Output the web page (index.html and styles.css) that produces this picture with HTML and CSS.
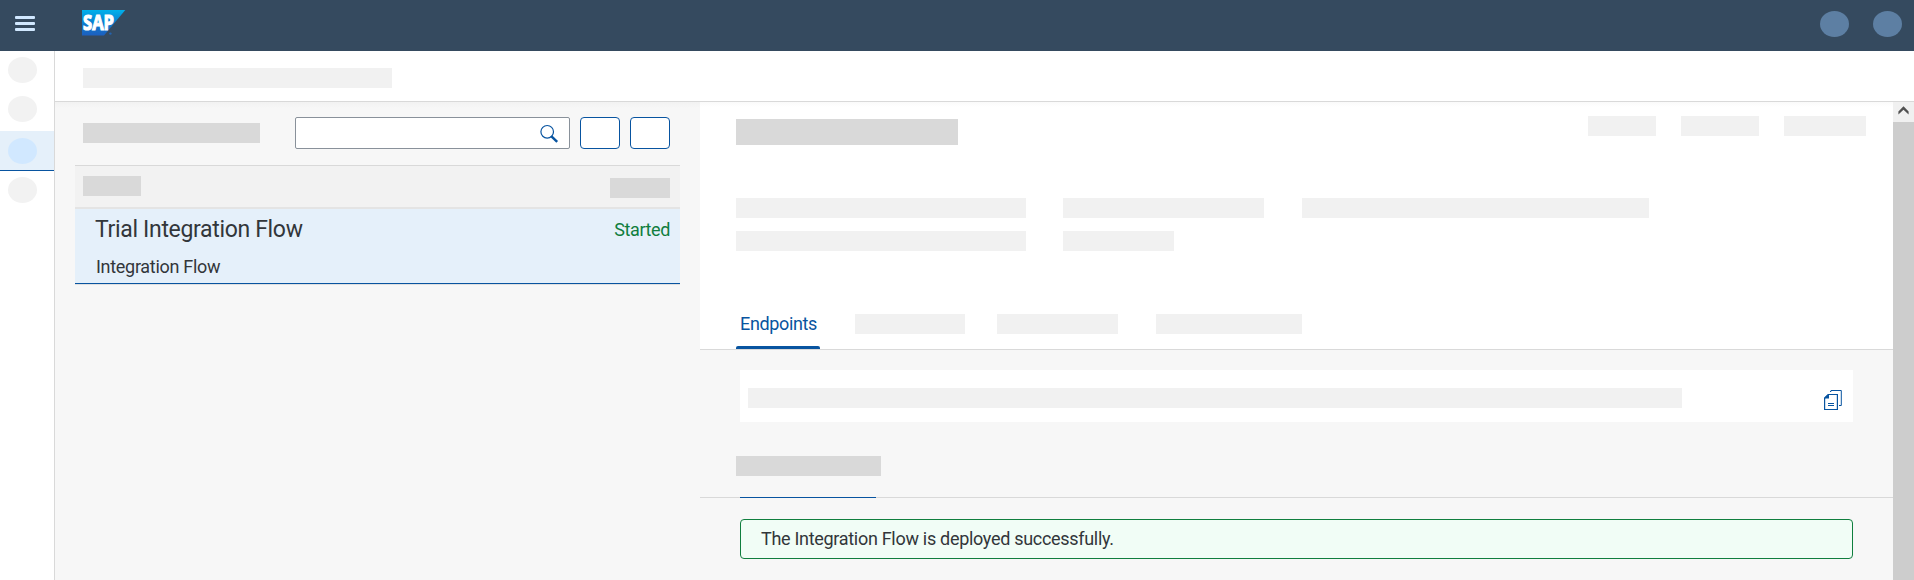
FILE: index.html
```html
<!DOCTYPE html>
<html lang="en">
<head>
<meta charset="utf-8">
<title>Manage Integration Content</title>
<link rel="stylesheet" href="styles.css">
</head>
<body>
<header class="shell">
  <div class="burger"><i></i><i></i><i></i></div>
  <svg class="logo" width="46" height="34" viewBox="-2 -4 46 34">
    <defs><linearGradient id="sap" x1="0" y1="0" x2="0" y2="1"><stop offset="0" stop-color="#00b1eb"/><stop offset="0.5" stop-color="#0a7fd0"/><stop offset="1" stop-color="#1d5fbf"/></linearGradient></defs>
    <path d="M0 0H43.3L22 25.5H0Z" fill="url(#sap)"/>
    <text class="logo-text" x="1" y="20.3" textLength="31" lengthAdjust="spacingAndGlyphs">SAP</text>
    <circle cx="28.4" cy="23.6" r="1.2" fill="#2463b0"/>
  </svg>
  <div class="shell-actions"><span class="dot blue"></span><span class="dot blue"></span></div>
</header>
<div class="body">
  <nav class="side">
    <div class="nav-item first"><span class="dot"></span></div>
    <div class="nav-item second"><span class="dot"></span></div>
    <div class="nav-item active"><span class="dot"></span></div>
    <div class="nav-item last"><span class="dot"></span></div>
  </nav>
  <div class="work">
    <div class="crumbs"><span class="ph w309"></span></div>
    <main class="split">
      <section class="master">
        <div class="toolbar">
          <span class="ph dark w177"></span>
          <div class="search">
            <svg width="19" height="18" viewBox="0 0 19 18"><circle cx="7.2" cy="6.8" r="6.3" fill="none" stroke="#0854a0" stroke-width="1.2"/><path d="M11.2 11.2L17.2 16.8" stroke="#0854a0" stroke-width="2.5"/></svg>
          </div>
          <span class="btn"></span><span class="btn"></span>
        </div>
        <div class="thead"><span class="ph dark w58"></span><span class="ph dark w60"></span></div>
        <div class="item">
          <div class="item-top"><span class="name">Trial Integration Flow</span><span class="status">Started</span></div>
          <div class="type">Integration Flow</div>
        </div>
      </section>
      <section class="detail">
        <div class="object">
          <div class="object-top">
            <span class="ph dark title"></span>
            <div class="actions"><span class="ph w68"></span><span class="ph w78"></span><span class="ph w82"></span></div>
          </div>
          <div class="facts">
            <span class="ph w290"></span><span class="ph w201"></span><span class="ph w347"></span>
            <span class="ph w290"></span><span class="ph w111"></span>
          </div>
          <div class="tabs">
            <div class="tab"><span>Endpoints</span><i></i></div>
            <span class="ph w110"></span><span class="ph w121"></span><span class="ph w146"></span>
          </div>
        </div>
        <div class="endpoint">
          <span class="ph w934"></span>
          <svg width="18" height="20" viewBox="0 0 18 20" fill="none" stroke="#0854a0">
            <path d="M6 1.5H7V0.5H17.3V15.5H15"/>
            <path d="M4.5 4.5H13.4V19.5H0.6V8.2Z" stroke-width="1.2"/>
            <path d="M0.3 8.5V7.5L4 4H5V8.5Z" fill="#0854a0" stroke="none"/>
            <path d="M4 13.5H10M4 15.5H10"/>
          </svg>
        </div>
        <div class="section-head"><span class="ph dark w145"></span></div>
        <div class="section-line"><i></i></div>
        <div class="message"><span>The Integration Flow is deployed successfully.</span></div>
      </section>
      <div class="scroll"><div class="up"><svg width="11" height="10" viewBox="0 0 11 10"><path d="M0.4 8.6V5.6L5.5 0.2L10.6 5.6V8.6L5.5 3.8Z" fill="#505050"/></svg></div></div>
    </main>
  </div>
</div>
</body>
</html>
```
FILE: styles.css
```css
* { box-sizing: border-box; }
body { margin: 0; height: 580px; overflow: hidden; display: flex; flex-direction: column; font-family: Roboto, "Liberation Sans", sans-serif; color: #32363a; background: #f7f7f7; }
svg { display: block; flex: none; overflow: visible; }

.shell { height: 51px; flex: none; background: #354a5f; display: flex; padding-left: 15px; }
.burger { width: 20px; margin-top: 16px; display: flex; flex-direction: column; gap: 3px; }
.burger i { height: 3px; border-radius: 1px; background: #d1e8ff; }
.logo { margin: 6px 0 0 45px; }
.logo-text { font: bold 21px "Open Sans", sans-serif; fill: #fff; stroke: #fff; stroke-width: 1.2px; }
.shell-actions { margin: 11px 12px 0 auto; display: flex; gap: 24px; }
.dot { display: block; width: 29px; height: 26px; border-radius: 50%; background: #f2f2f2; }
.dot.blue { background: #5d7fa3; }

.body { flex: 1; display: flex; min-height: 0; }
.side { width: 55px; flex: none; background: #fff; border-right: 1px solid #d9d9d9; }
.nav-item { padding-left: 8px; }
.first { height: 39px; padding-top: 6px; }
.second { height: 41px; padding-top: 6px; }
.active { height: 40px; padding-top: 7px; background: #e5f0fa; border-bottom: 1px solid #0854a0; }
.active .dot { background: #d1e8ff; }
.last { padding-top: 6px; }

.work { flex: 1; min-width: 0; display: flex; flex-direction: column; }
.crumbs { height: 51px; flex: none; background: #fff; border-bottom: 1px solid #d9d9d9; padding: 17px 0 0 28px; }
.ph { display: block; flex: none; height: 20px; background: #f1f1f1; }
.dark { background: #d9d9d9; }
.w58 { width: 58px; } .w60 { width: 60px; } .w68 { width: 68px; } .w78 { width: 78px; } .w82 { width: 82px; }
.w110 { width: 110px; } .w111 { width: 111px; } .w121 { width: 121px; } .w145 { width: 145px; } .w146 { width: 146px; }
.w177 { width: 177px; } .w201 { width: 201px; } .w290 { width: 290px; } .w309 { width: 309px; } .w347 { width: 347px; } .w934 { width: 934px; }

.split { flex: 1; display: flex; min-height: 0; background: linear-gradient(#f2f2f2, #f7f7f7 6px); }
.master { width: 605px; margin: 0 20px; flex: none; }
.toolbar { height: 63px; padding: 15px 10px 0 8px; display: flex; gap: 10px; }
.toolbar .ph { margin: 6px 25px 0 0; }
.search { width: 275px; height: 32px; border: 1px solid #89919a; border-radius: 2px; background: #fff; display: flex; justify-content: flex-end; padding: 7px 10px 0 0; }
.btn { width: 40px; height: 32px; border: 1px solid #0854a0; border-radius: 4px; background: #fff; }
.thead { height: 44px; border-top: 1px solid #d9d9d9; border-bottom: 2px solid #e4e4e4; background: #f2f2f2; display: flex; justify-content: space-between; padding: 10px 10px 0 8px; }
.thead .w60 { margin-top: 2px; }
.item { height: 75px; background: #e5f0fa; border-bottom: 1px solid #0854a0; box-shadow: 0 1px #e0e0e0; padding: 0 10px 0 20px; }
.item-top { display: flex; justify-content: space-between; height: 40px; line-height: 41px; white-space: nowrap; }
.name { font-size: 23px; letter-spacing: -0.33px; }
.status { font-size: 18px; color: #107e3e; letter-spacing: -0.4px; line-height: 42px; }
.type { font-size: 18px; padding-left: 1px; line-height: 36px; letter-spacing: -0.3px; }

.detail { width: 1193px; flex: none; }
.object { height: 248px; background: linear-gradient(#fafafa, #fff 5px); border-bottom: 1px solid #d9d9d9; padding-left: 36px; }
.object-top { height: 96px; padding: 14px 27px 0 0; display: flex; justify-content: space-between; }
.title { width: 222px; height: 26px; margin-top: 3px; }
.actions { display: flex; gap: 25px; }
.facts { height: 108px; display: grid; grid-template-columns: 290px 201px 347px; column-gap: 37px; row-gap: 13px; align-content: start; }
.facts .w347 { margin-left: 1px; }
.tabs { display: flex; height: 43px; padding-top: 8px; }
.tab { width: 84px; height: 35px; margin-right: 35px; color: #0854a0; font-size: 18px; line-height: 20px; letter-spacing: -0.35px; display: flex; flex-direction: column; justify-content: space-between; }
.tab span { padding-left: 4px; }
.tab i { height: 3px; background: #0854a0; border-radius: 2px 2px 0 0; }
.tabs .w121 { margin: 0 38px 0 32px; }
.endpoint { width: 1113px; height: 52px; margin: 20px 0 0 40px; background: #fff; display: flex; justify-content: space-between; padding: 18px 11px 0 8px; }
.endpoint svg { margin-top: 2px; }
.section-head { height: 75px; padding: 34px 0 0 36px; }
.section-line { height: 1px; background: #d9d9d9; padding-left: 40px; }
.section-line i { display: block; width: 136px; height: 1px; background: #0854a0; }
.message { width: 1113px; height: 40px; margin: 21px 0 0 40px; border: 1px solid #107e3e; border-radius: 4px; background: #f1fdf6; font-size: 18px; line-height: 37px; padding-left: 20px; letter-spacing: -0.3px; }
.scroll { flex: 1; background: #cdcdcd; }
.up { height: 20px; background: #f0f0f0; display: flex; justify-content: center; padding-top: 4px; }
```
